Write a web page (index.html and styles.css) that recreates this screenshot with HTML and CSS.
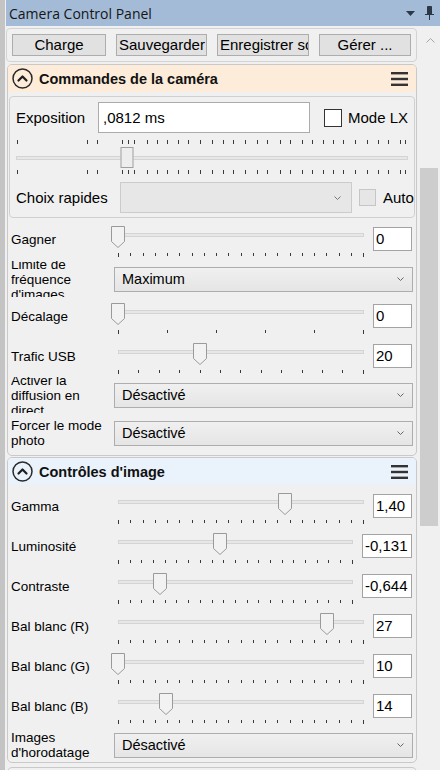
FILE: index.html
```html
<!DOCTYPE html>
<html lang="fr">
<head>
    <meta charset="UTF-8">
    <meta name="viewport" content="width=device-width, initial-scale=1.0">
    <title>Camera Control Panel</title>
    <link rel="stylesheet" href="styles.css">
</head>
<body>
<div class="window">
    <div class="titlebar">
        <span class="title">Camera Control Panel</span>
        <svg class="tb-drop" width="9" height="5" viewBox="0 0 9 5"><path d="M0 0H9L4.5 5Z" fill="#2c3846"/></svg>
        <svg class="tb-pin" width="9" height="14" viewBox="0 0 9 14"><path d="M2.5 0.5H6.5V8H2.5Z" fill="#2c3846" stroke="#2c3846"/><path d="M0 8.5H9M4.5 9V14" stroke="#2c3846"/></svg>
    </div>
    <div class="main">
        <div class="content">
            <div class="toolbar">
                <button class="btn">Charge</button>
                <button class="btn">Sauvegarder</button>
                <button class="btn">Enregistrer sous...</button>
                <button class="btn">Gérer ...</button>
            </div>

            <section class="card">
                <div class="card-head cam">
                    <svg class="collapse" width="21" height="21" viewBox="0 0 21 21"><circle cx="10.5" cy="10.5" r="9.5" fill="none" stroke="#2a2a2a" stroke-width="1.5"/><path d="M6.5 12.5L10.5 8.5L14.5 12.5" fill="none" stroke="#1e1e1e" stroke-width="2.2" stroke-linecap="round" stroke-linejoin="round"/></svg>
                    <span class="card-title">Commandes de la caméra</span>
                    <svg class="menu" width="17" height="14" viewBox="0 0 17 14"><rect width="17" height="2.4"/><rect y="5.8" width="17" height="2.4"/><rect y="11.6" width="17" height="2.4"/></svg>
                </div>

                <div class="expo">
                    <div class="expo-row">
                        <span class="expo-label">Exposition</span>
                        <div class="text-input">,0812 ms</div>
                        <span class="check"></span>
                        <span class="check-label">Mode LX</span>
                    </div>
                    <div class="expo-slider" data-value="28.4" data-ticks="1,71,81,106,112,118,131,141,151,162,172,184,196,207,217,229,241,251,264,274,286,296,307,317,327,339,351,362,372,384,389"></div>
                    <div class="expo-row">
                        <span class="quick-label">Choix rapides</span>
                        <div class="combo-off"><svg width="7" height="4" viewBox="0 0 7 4"><path d="M0.5 0.5L3.5 3.5L6.5 0.5" fill="none" stroke="#777"/></svg></div>
                        <span class="check off"></span>
                        <span class="check-label auto">Auto</span>
                    </div>
                </div>

                <div class="row slider-row first">
                    <span class="row-label">Gagner</span>
                    <div class="slider" data-value="0" data-ticks="20"></div>
                    <div class="value">0</div>
                </div>
                <div class="row sel-row tall">
                    <span class="sel-label">Limite de fréquence d'images</span>
                    <div class="combo">Maximum<svg width="7" height="4" viewBox="0 0 7 4"><path d="M0.5 0.5L3.5 3.5L6.5 0.5" fill="none" stroke="#666"/></svg></div>
                </div>
                <div class="row slider-row">
                    <span class="row-label">Décalage</span>
                    <div class="slider" data-value="0" data-ticks="5"></div>
                    <div class="value">0</div>
                </div>
                <div class="row slider-row">
                    <span class="row-label">Trafic USB</span>
                    <div class="slider" data-value="33.5" data-ticks="12"></div>
                    <div class="value">20</div>
                </div>
                <div class="row sel-row">
                    <span class="sel-label">Activer la diffusion en direct</span>
                    <div class="combo">Désactivé<svg width="7" height="4" viewBox="0 0 7 4"><path d="M0.5 0.5L3.5 3.5L6.5 0.5" fill="none" stroke="#666"/></svg></div>
                </div>
                <div class="row sel-row last">
                    <span class="sel-label">Forcer le mode photo</span>
                    <div class="combo">Désactivé<svg width="7" height="4" viewBox="0 0 7 4"><path d="M0.5 0.5L3.5 3.5L6.5 0.5" fill="none" stroke="#666"/></svg></div>
                </div>
            </section>

            <section class="card second">
                <div class="card-head img">
                    <svg class="collapse" width="21" height="21" viewBox="0 0 21 21"><circle cx="10.5" cy="10.5" r="9.5" fill="none" stroke="#2a2a2a" stroke-width="1.5"/><path d="M6.5 12.5L10.5 8.5L14.5 12.5" fill="none" stroke="#1e1e1e" stroke-width="2.2" stroke-linecap="round" stroke-linejoin="round"/></svg>
                    <span class="card-title">Contrôles d'image</span>
                    <svg class="menu" width="17" height="14" viewBox="0 0 17 14"><rect width="17" height="2.4"/><rect y="5.8" width="17" height="2.4"/><rect y="11.6" width="17" height="2.4"/></svg>
                </div>
                <div class="row slider-row">
                    <span class="row-label">Gamma</span>
                    <div class="slider" data-value="67.9" data-ticks="20"></div>
                    <div class="value">1,40</div>
                </div>
                <div class="row slider-row">
                    <span class="row-label">Luminosité</span>
                    <div class="slider" data-value="43.6" data-ticks="20"></div>
                    <div class="value wide">-0,131</div>
                </div>
                <div class="row slider-row">
                    <span class="row-label">Contraste</span>
                    <div class="slider" data-value="17.9" data-ticks="20"></div>
                    <div class="value wide">-0,644</div>
                </div>
                <div class="row slider-row">
                    <span class="row-label">Bal blanc (R)</span>
                    <div class="slider" data-value="84.8" data-ticks="20"></div>
                    <div class="value">27</div>
                </div>
                <div class="row slider-row">
                    <span class="row-label">Bal blanc (G)</span>
                    <div class="slider" data-value="0" data-ticks="20"></div>
                    <div class="value">10</div>
                </div>
                <div class="row slider-row">
                    <span class="row-label">Bal blanc (B)</span>
                    <div class="slider" data-value="19.7" data-ticks="20"></div>
                    <div class="value">14</div>
                </div>
                <div class="row sel-row">
                    <span class="sel-label">Images d'horodatage</span>
                    <div class="combo">Désactivé<svg width="7" height="4" viewBox="0 0 7 4"><path d="M0.5 0.5L3.5 3.5L6.5 0.5" fill="none" stroke="#666"/></svg></div>
                </div>
            </section>

            <section class="card stub"></section>
        </div>
        <div class="scrollbar">
            <svg class="sb-up" width="9" height="5" viewBox="0 0 9 5"><path d="M0.5 4.5L4.5 0.5L8.5 4.5" fill="none" stroke="#a6a6a6"/></svg>
            <div class="sb-thumb"></div>
        </div>
    </div>
</div>

<script>
    var THUMB = '<svg class="thumb" width="14" height="22" viewBox="0 0 14 22">' +
        '<path d="M0.5 0.5H13.5V15.5L7 21.5L0.5 15.5Z" fill="#f2f2f2" stroke="#9a9a9a"/></svg>';

    document.querySelectorAll('.slider').forEach(function (el) {
        var n = parseInt(el.dataset.ticks, 10);
        var ticks = '';
        for (var i = 0; i <= n; i++) {
            ticks += '<span></span>';
        }
        el.innerHTML = '<div class="slider-area"><div class="track"></div><div class="ticks">' + ticks + '</div>' + THUMB + '</div>';
        el.querySelector('.thumb').style.left = el.dataset.value + '%';
    });

    var expo = document.querySelector('.expo-slider');
    var marks = expo.dataset.ticks.split(',').map(function (p) {
        return '<span style="left:' + p + 'px"></span>';
    }).join('');
    expo.innerHTML = '<div class="free-ticks top">' + marks + '</div><div class="track"></div>' +
        '<div class="free-ticks bottom">' + marks + '</div><div class="thumb-box"></div>';
    expo.querySelector('.thumb-box').style.left = expo.dataset.value + '%';
</script>
</body>
</html>
```

FILE: styles.css
```css
* {
    box-sizing: border-box;
}
body {
    margin: 0;
    font-family: "Liberation Sans", Arial, sans-serif;
    background: #f0f0f0;
    color: #000;
    overflow: hidden;
}
.window {
    height: 770px;
    border-left: 5px solid #c4c4c4;
    display: flex;
    flex-direction: column;
}
.titlebar {
    height: 26px;
    flex-shrink: 0;
    margin-left: 1px;
    padding: 0 6px 0 3px;
    background: #a3bbd7;
    display: flex;
    align-items: center;
}
.title {
    flex: 1;
    font-family: "Open Sans", sans-serif;
    font-size: 14px;
    color: #161616;
}
.tb-drop {
    margin-right: 10px;
}
.main {
    flex: 1;
    display: flex;
    min-height: 0;
}
.content {
    width: 413px;
    flex-shrink: 0;
}
.scrollbar {
    width: 22px;
}
.sb-up {
    display: block;
    margin: 12px 0 0 8px;
}
.sb-thumb {
    margin: 125px 2px 0;
    height: 358px;
    background: #cdcdcd;
}

/* top button bar */
.toolbar {
    margin: 2px 1px 0;
    padding: 5px;
    border: 1px solid #d3d3d3;
    border-radius: 4px;
    display: grid;
    grid-template-columns: 94px 91px 92px 92px;
    column-gap: 10px;
}
.btn {
    height: 22px;
    padding: 0 2px;
    font: 15px "Liberation Sans", Arial, sans-serif;
    line-height: 20px;
    color: #000;
    background: #e1e1e1;
    border: 1px solid #adadad;
    white-space: nowrap;
    overflow: hidden;
    text-align: center;
}

/* collapsible cards */
.card {
    margin: 2px 1px 0 2px;
    border: 1px solid #c9c9c9;
    border-radius: 5px;
    overflow: hidden;
}
.card.second {
    margin-top: 1px;
    padding-bottom: 1px;
}
.card.stub {
    margin-top: 4px;
    height: 20px;
}
.card-head {
    height: 27px;
    padding: 0 8px 0 4px;
    display: flex;
    align-items: center;
}
.card-head.cam {
    background: #fcecd9;
}
.card-head.img {
    margin-bottom: 4px;
    background: #eaf3fb;
}
.card-title {
    flex: 1;
    margin-left: 6px;
    font-weight: bold;
    font-size: 14.5px;
    color: #111;
}
.menu {
    fill: #333;
}

/* exposure block */
.expo {
    margin: 4px 1px;
    padding: 5px 0 4px 6px;
    border: 1px solid #d0d0d0;
    border-radius: 4px;
}
.expo-row {
    height: 31px;
    display: flex;
    align-items: center;
    font-size: 15px;
}
.expo-label {
    width: 82px;
}
.quick-label {
    width: 104px;
}
.text-input {
    width: 212px;
    height: 31px;
    padding-left: 4px;
    line-height: 29px;
    background: #fff;
    border: 1px solid #ababab;
}
.check {
    width: 18px;
    height: 18px;
    margin-left: 14px;
    background: #fff;
    border: 1px solid #333;
}
.check.off {
    width: 17px;
    height: 17px;
    margin-left: 7px;
    background: #e6e6e6;
    border-color: #c6c6c6;
}
.check-label {
    margin-left: 6px;
}
.check-label.auto {
    margin-left: 7px;
}
.combo-off {
    width: 232px;
    height: 31px;
    padding-right: 10px;
    background: #e7e7e7;
    border: 1px solid #cbcbcb;
    display: flex;
    align-items: center;
    justify-content: flex-end;
}
.expo-slider {
    position: relative;
    height: 49px;
    margin-right: 6px;
}
.expo-slider .track {
    top: 23px;
}
.free-ticks {
    position: absolute;
    left: 0;
    right: 0;
    height: 4px;
}
.free-ticks.top {
    top: 7px;
}
.free-ticks.bottom {
    top: 37px;
}
.free-ticks span {
    position: absolute;
    top: 0;
    width: 1px;
    height: 4px;
    background: #3a3a3a;
}
.thumb-box {
    position: absolute;
    top: 14px;
    width: 13px;
    height: 21px;
    transform: translateX(-50%);
    background: #ededed;
    border: 1px solid #9f9f9f;
}

/* property rows */
.row {
    display: flex;
    padding: 0 3px;
    font-size: 13.5px;
}
.slider-row {
    height: 40px;
    align-items: flex-start;
}
.slider-row.first {
    height: 37px;
}
.sel-row {
    height: 32px;
    align-items: center;
}
.sel-row.tall {
    height: 40px;
}
.sel-row.last {
    height: 44px;
}
.row-label {
    width: 100px;
    margin-top: 10px;
    line-height: 16px;
    white-space: nowrap;
}
.sel-label {
    width: 103px;
    height: 36px;
    flex-shrink: 0;
    overflow: hidden;
    display: flex;
    align-items: center;
    line-height: 15px;
}
.combo {
    flex: 1;
    height: 25px;
    padding: 0 8px 0 7px;
    font-size: 14.5px;
    background: linear-gradient(#f0f0f0, #e5e5e5);
    border: 1px solid #adadad;
    display: flex;
    align-items: center;
    justify-content: space-between;
}
.slider {
    flex: 1;
    position: relative;
    height: 36px;
}
.slider-area {
    position: absolute;
    left: 7px;
    right: 7px;
    top: 0;
    bottom: 0;
}
.track {
    position: absolute;
    left: 0;
    right: 0;
    top: 11px;
    height: 4px;
    background: #e7e7e7;
    border: 1px solid #d4d4d4;
}
.ticks {
    position: absolute;
    left: 0;
    right: 0;
    top: 31px;
    height: 4px;
    display: flex;
    justify-content: space-between;
}
.ticks span {
    width: 1px;
    height: 3px;
    background: #3a3a3a;
}
.ticks span:first-child,
.ticks span:last-child {
    height: 4px;
}
.thumb {
    position: absolute;
    top: 4px;
    transform: translateX(-50%);
}
.value {
    width: 39px;
    height: 24px;
    margin: 5px 1px 0 2px;
    padding-left: 2px;
    font-size: 15px;
    line-height: 22px;
    background: #fff;
    border: 1px solid #a3a3a3;
}
.value.wide {
    width: 50px;
}
```
